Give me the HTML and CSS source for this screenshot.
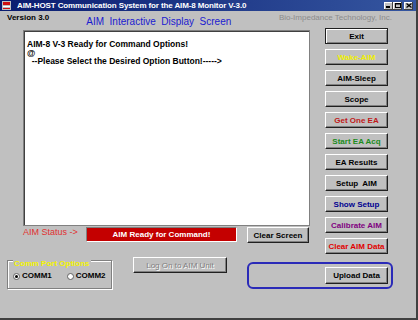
FILE: index.html
```html
<!DOCTYPE html>
<html lang="en">
<head>
<meta charset="UTF-8" />
<title>AIM-HOST Communication System</title>
<link rel="stylesheet" href="styles.css">
</head>
<body>
<div class="window">
  <div class="titlebar">
    <svg class="app-icon" width="9" height="9" viewBox="0 0 9 9">
      <rect x="0" y="0" width="9" height="9" fill="#c0c0c0"/>
      <rect x="1" y="1" width="7" height="3" fill="#d01010"/>
      <rect x="1" y="5" width="7" height="1" fill="#ffffff"/>
      <rect x="1" y="7" width="7" height="1" fill="#d01010"/>
    </svg>
    <span class="title">AIM-HOST Communication System for the AIM-8 Monitor V-3.0</span>
    <div class="caption-buttons">
      <span class="cap-btn"><svg width="5" height="5" viewBox="0 0 5 5"><rect x="0" y="3" width="4" height="2" fill="#000"/></svg></span>
      <span class="cap-btn"><svg width="6" height="5" viewBox="0 0 6 5"><rect x="0.5" y="0.5" width="5" height="4" fill="none" stroke="#000"/><rect x="0" y="0" width="6" height="1.5" fill="#000"/></svg></span>
      <span class="cap-btn close"><svg width="6" height="5" viewBox="0 0 6 5"><path d="M0.5 0.5 L5.5 4.5 M5.5 0.5 L0.5 4.5" stroke="#000" stroke-width="1.3"/></svg></span>
    </div>
  </div>

  <div class="header">
    <span class="version">Version 3.0</span>
    <span class="screen-title">AIM&nbsp; Interactive&nbsp; Display&nbsp; Screen</span>
    <span class="company">Bio-Impedance Technology, Inc.</span>
  </div>

  <div class="middle">
    <div class="left">
      <div class="display">
        <p>AIM-8 V-3 Ready for Command Options!</p>
        <p>@</p>
        <p>&nbsp; --Please Select the Desired Option Button!-----&gt;</p>
      </div>
      <div class="status-row">
        <span class="status-label">AIM Status -&gt;</span>
        <span class="status-box">AIM Ready for Command!</span>
        <button class="btn clear">Clear Screen</button>
      </div>
    </div>
    <div class="commands">
      <button class="btn default">Exit</button>
      <button class="btn yellow">Wake-AIM</button>
      <button class="btn">AIM-Sleep</button>
      <button class="btn">Scope</button>
      <button class="btn darkred">Get One EA</button>
      <button class="btn green">Start EA Acq</button>
      <button class="btn">EA Results</button>
      <button class="btn">Setup&nbsp; AIM</button>
      <button class="btn navy">Show Setup</button>
      <button class="btn purple">Calibrate AIM</button>
      <button class="btn red">Clear AIM Data</button>
    </div>
  </div>

  <div class="bottom">
    <div class="groupbox">
      <span class="legend">Comm Port Options</span>
      <div class="radios">
        <span class="radio checked"></span><span class="radio-label">COMM1</span>
        <span class="radio second"></span><span class="radio-label">COMM2</span>
      </div>
    </div>
    <button class="btn logon" disabled>Log On to AIM Unit</button>
    <div class="upload-box">
      <button class="btn upload">Upload Data</button>
    </div>
  </div>
</div>
</body>
</html>
```

FILE: styles.css
```css
* {
  box-sizing: border-box;
}
body {
  margin: 0;
  background: #c0c0c0;
  font-family: "Liberation Sans", Arial, sans-serif;
}
.window {
  width: 418px;
  height: 320px;
  background: #c0c0c0;
  border-right: 2px solid #404040;
  border-bottom: 2px solid #404040;
  display: flex;
  flex-direction: column;
  overflow: hidden;
}

/* title bar */
.titlebar {
  height: 11px;
  flex: none;
  background: linear-gradient(90deg, #0a1c70, #3556a0);
  display: flex;
  align-items: center;
  padding: 0 3px 0 2px;
  color: #fff;
}
.app-icon {
  margin-right: 6px;
  flex: none;
}
.title {
  font-size: 8px;
  font-weight: bold;
  letter-spacing: -0.12px;
  white-space: nowrap;
  line-height: 11px;
}
.caption-buttons {
  margin-left: auto;
  display: flex;
}
.cap-btn {
  width: 9px;
  height: 8px;
  background: #c0c0c0;
  box-shadow: inset -1px -1px #404040, inset 1px 1px #fff;
  display: flex;
  align-items: center;
  justify-content: center;
}
.cap-btn.close {
  margin-left: 2px;
}

/* header line */
.header {
  height: 17px;
  flex: none;
  display: flex;
  padding-left: 7px;
  white-space: nowrap;
}
.version {
  font-size: 8px;
  font-weight: bold;
  margin-top: 2px;
}
.screen-title {
  align-self: flex-end;
  margin-left: 37px;
  margin-bottom: 1px;
  font-size: 10px;
  color: #1a1ad0;
}
.company {
  margin-left: auto;
  margin-right: 24px;
  margin-top: 2px;
  font-size: 8px;
  color: #8c8c8c;
}

/* main area */
.middle {
  display: flex;
  padding-left: 23px;
  flex: none;
}
.left {
  width: 287px;
  margin-top: 2px;
}
.display {
  height: 196px;
  background: #fff;
  border: 1px solid #808080;
  box-shadow: inset 1px 1px #404040;
  padding: 9px 3px;
  font-size: 8.5px;
  font-weight: bold;
  line-height: 8.5px;
}
.display p {
  margin: 0;
  white-space: nowrap;
}
.status-row {
  display: flex;
  align-items: flex-start;
  height: 17px;
}
.status-label {
  width: 63px;
  margin-top: 1px;
  font-size: 9px;
  color: #e03030;
  white-space: nowrap;
}
.status-box {
  width: 151px;
  height: 15px;
  margin-top: 1px;
  background: #c40000;
  border-top: 1px solid #808080;
  border-left: 1px solid #808080;
  border-bottom: 1px solid #fff;
  border-right: 1px solid #fff;
  color: #fff;
  font-size: 8px;
  font-weight: bold;
  text-align: center;
  line-height: 13px;
}
.commands {
  margin-left: 15px;
  display: flex;
  flex-direction: column;
  gap: 5px;
}

/* buttons */
.btn {
  width: 63px;
  height: 16px;
  padding: 0;
  background: #c0c0c0;
  border: 1px solid;
  border-color: #fff #202020 #202020 #fff;
  box-shadow: inset -1px -1px #808080;
  font-family: "Liberation Sans", Arial, sans-serif;
  font-size: 8px;
  font-weight: bold;
  color: #000;
  white-space: nowrap;
}
.btn.default {
  border-color: #202020;
  box-shadow: inset 1px 1px #fff, inset -1px -1px #808080;
}
.btn.clear {
  width: 62px;
  margin-left: 10px;
  margin-top: 1px;
}
.yellow { color: #f0f000; }
.darkred { color: #c01818; }
.green { color: #1c8c1c; }
.navy { color: #000090; }
.purple { color: #800080; }
.red { color: #e00000; }

/* bottom area */
.bottom {
  display: flex;
  align-items: flex-start;
  padding: 3px 0 0 7px;
}
.groupbox {
  width: 105px;
  height: 29px;
  margin-top: 3px;
  border: 1px solid #808080;
  box-shadow: inset 1px 1px #fff, 1px 1px #fff;
  padding: 0 5px;
  display: flex;
  flex-direction: column;
  align-items: flex-start;
  font-size: 8px;
  line-height: 8px;
}
.legend {
  margin-top: -1px;
  padding: 0 1px;
  background: #c0c0c0;
  color: #f4f400;
  font-weight: bold;
}
.radios {
  display: flex;
  align-items: center;
  margin-top: 4px;
}
.radio {
  width: 7px;
  height: 7px;
  border-radius: 50%;
  background: #fff;
  border: 1px solid #606060;
  display: flex;
  align-items: center;
  justify-content: center;
}
.radio.checked::after {
  content: "";
  width: 3px;
  height: 3px;
  border-radius: 50%;
  background: #000;
}
.radio.second {
  margin-left: 15px;
}
.radio-label {
  margin-left: 2px;
  font-weight: bold;
}
.btn.logon {
  width: 94px;
  margin-left: 21px;
  font-weight: normal;
  color: #808080;
  text-shadow: 1px 1px #fff;
}
.upload-box {
  width: 146px;
  height: 27px;
  margin-left: 20px;
  margin-top: 5px;
  border: 2px solid #2a2ab8;
  border-radius: 6px;
  display: flex;
  justify-content: flex-end;
  align-items: center;
  padding-right: 3px;
}
.btn.upload {
  height: 17px;
}
```
